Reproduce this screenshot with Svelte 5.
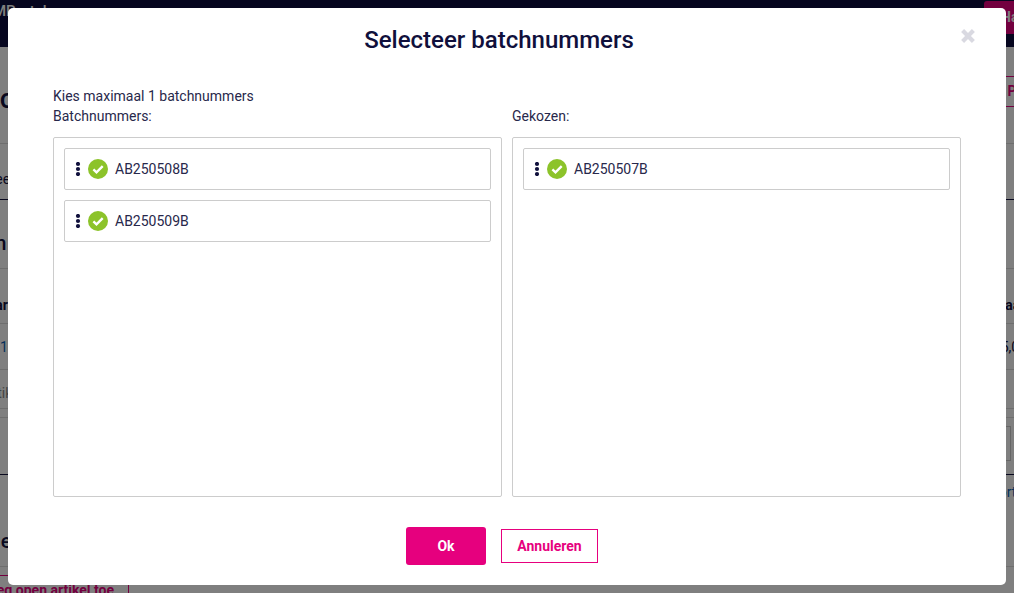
<script>
  const left = ['AB250508B', 'AB250509B'];
  const right = ['AB250507B'];
</script>

{#snippet item(code)}
  <div class="item">
    <svg class="dots" width="6" height="14" viewBox="0 0 6 14" aria-hidden="true">
      <circle cx="3" cy="2" r="2.1" />
      <circle cx="3" cy="7" r="2.1" />
      <circle cx="3" cy="12" r="2.1" />
    </svg>
    <svg class="check" width="20" height="20" viewBox="0 0 20 20" aria-hidden="true">
      <circle cx="10" cy="10" r="10" />
      <path d="M5.4 10.4 8.5 13.4 14.7 7.2" />
    </svg>
    <span>{code}</span>
  </div>
{/snippet}

<div class="page">
  <header class="top">
    <span class="brand">MPortal</span>
    <span class="headbtn">Ha</span>
  </header>
  <div class="row titlerow">
    <span class="pagetitle">Product</span>
    <span class="outline">Print</span>
  </div>
  <div class="row tabs"><span>Overzee</span></div>
  <div class="row section"><span class="h2">Artikelen</span></div>
  <div class="row thead"><b>Naar</b><b>aan</b></div>
  <div class="row tr"><span class="link">1</span><span>5,00</span></div>
  <div class="row tr2"><span class="muted">Artikel</span></div>
  <div class="row spacer"></div>
  <div class="row foot"><span class="inputbox"></span></div>
  <div class="row lower">
    <span class="h2 rule">Regel</span>
    <span class="link sort">Sorteer</span>
  </div>
  <div class="row gap"></div>
  <button class="add">Voeg open artikel toe</button>
</div>

<div class="overlay">
  <div class="modal">
    <h1>Selecteer batchnummers</h1>
    <svg class="close" width="14" height="14" viewBox="0 0 14 14" aria-hidden="true">
      <path d="M1.6 1.6 12.4 12.4M12.4 1.6 1.6 12.4" />
    </svg>
    <p class="hint">Kies maximaal 1 batchnummers</p>
    <div class="columns">
      <section>
        <p class="label">Batchnummers:</p>
        <div class="box">
          {#each left as code}
            {@render item(code)}
          {/each}
        </div>
      </section>
      <section>
        <p class="label">Gekozen:</p>
        <div class="box">
          {#each right as code}
            {@render item(code)}
          {/each}
        </div>
      </section>
    </div>
    <div class="actions">
      <button class="ok">Ok</button>
      <button class="cancel">Annuleren</button>
    </div>
  </div>
</div>

<style>
  :global(body) {
    margin: 0;
    background: #fff;
    font-family: Roboto, "Liberation Sans", sans-serif;
    overflow: hidden;
  }
  .page {
    width: 1014px;
    height: 593px;
    overflow: hidden;
    color: #10103c;
    font-size: 14px;
  }
  .top {
    height: 47px;
    background: #0c0d3e;
    display: flex;
    justify-content: space-between;
    color: #fff;
  }
  .brand {
    font-size: 15px;
    line-height: 24px;
    margin-left: -7px;
    font-weight: 500;
    margin-top: -1px;
  }
  .headbtn {
    width: 30px;
    height: 33px;
    margin-top: 1px;
    background: #e6007e;
    border-radius: 3px 0 0 3px;
    font-weight: 700;
    line-height: 33px;
    text-indent: 17px;
    overflow: hidden;
    white-space: nowrap;
  }
  .row {
    display: flex;
    justify-content: space-between;
    align-items: flex-start;
    border-bottom: 1px solid #ddd;
    box-sizing: border-box;
  }
  .titlerow {
    height: 97px;
    margin-left: -75px;
  }
  .pagetitle {
    font-size: 28px;
    line-height: 34px;
    margin-top: 35px;
    font-weight: 500;
  }
  .outline {
    border: 1px solid #e6007e;
    color: #e6007e;
    font-weight: 700;
    height: 29px;
    line-height: 29px;
    padding: 0 12px;
    margin-right: -37px;
    margin-top: 29px;
  }
  .tabs {
    height: 56px;
    margin-left: -40px;
    padding-top: 25px;
    line-height: 20px;
    border-bottom-color: #10103c;
  }
  .section {
    height: 69px;
    margin-left: -74px;
    padding-top: 31px;
  }
  .h2 {
    font-size: 20px;
    line-height: 24px;
    font-weight: 500;
  }
  .thead {
    height: 55px;
    margin: 0 -14px 0 -22px;
    padding-top: 26px;
    line-height: 20px;
  }
  .tr {
    height: 46px;
    margin: 0 -13px 0 -2px;
    padding-top: 13px;
    line-height: 20px;
  }
  .link {
    color: #0a5fb4;
  }
  .tr .link {
    margin-left: 2px;
  }
  .tr2 {
    height: 39px;
    margin-left: -17px;
    padding-top: 13px;
    line-height: 20px;
  }
  .muted {
    color: #888;
  }
  .spacer {
    height: 9px;
  }
  .foot {
    height: 57px;
    justify-content: flex-end;
    padding: 8px 3px 0 0;
    border-bottom-color: #10103c;
  }
  .inputbox {
    width: 60px;
    height: 35px;
    border: 1px solid #ccc;
    box-sizing: border-box;
    background: #fff;
  }
  .lower {
    height: 92px;
    margin: 0 -22px 0 -34px;
  }
  .rule {
    margin-top: 54px;
  }
  .sort {
    margin-top: 7px;
    line-height: 20px;
  }
  .gap {
    height: 8px;
    border: 0;
  }
  .add {
    display: block;
    box-sizing: border-box;
    width: 169px;
    height: 40px;
    margin-left: -40px;
    padding: 0 14px 10px 0;
    text-align: right;
    line-height: 20px;
    white-space: nowrap;
    background: #fff;
    color: #e6007e;
    border: 1px solid #e6007e;
    border-radius: 0;
  }
  .overlay {
    position: fixed;
    inset: 0;
    background: rgba(0, 0, 0, 0.5);
    display: flex;
    justify-content: center;
    align-items: flex-start;
    padding-top: 8px;
  }
  .modal {
    position: relative;
    box-sizing: border-box;
    width: 998px;
    height: 577px;
    padding: 0 45px;
    background: #fff;
    border-radius: 5px;
    color: #28284b;
  }
  h1 {
    margin: 0;
    padding: 17px 16px 0 0;
    height: 62px;
    box-sizing: border-box;
    text-align: center;
    color: #10103c;
    font-size: 24px;
    line-height: 30px;
    font-weight: 500;
  }
  .close {
    position: absolute;
    top: 21px;
    right: 31px;
  }
  .close path {
    fill: none;
    stroke: #d9d9e1;
    stroke-width: 4.2;
  }
  p {
    margin: 0;
    font-size: 14px;
    line-height: 20px;
  }
  .hint {
    padding-top: 16px;
  }
  .columns {
    display: grid;
    grid-template-columns: 449px 449px;
    gap: 10px;
  }
  .label {
    margin-bottom: 11px;
  }
  .box {
    height: 360px;
    box-sizing: border-box;
    border: 1px solid #ccc;
    border-radius: 2px;
    padding: 10px;
    display: flex;
    flex-direction: column;
    gap: 10px;
  }
  .item {
    height: 42px;
    box-sizing: border-box;
    border: 1px solid #ccc;
    border-radius: 2px;
    display: flex;
    align-items: center;
    padding: 0 0 1px 10px;
    font-size: 14px;
    color: #28284b;
  }
  .dots {
    fill: #10103c;
    flex: none;
  }
  .check {
    flex: none;
    margin-left: 7px;
    margin-right: 7px;
  }
  .check circle {
    fill: #8cc32a;
  }
  .check path {
    fill: none;
    stroke: #fff;
    stroke-width: 2.4;
  }
  .actions {
    display: flex;
    justify-content: center;
    align-items: center;
    gap: 15px;
    margin-top: 30px;
    padding-right: 10px;
  }
  button {
    font-family: inherit;
    font-size: 14px;
    font-weight: 700;
    cursor: pointer;
  }
  .ok {
    width: 80px;
    height: 38px;
    background: #e6007e;
    color: #fff;
    border: 0;
    border-radius: 3px;
  }
  .cancel {
    width: 97px;
    height: 34px;
    background: #fff;
    color: #e6007e;
    border: 1px solid #e6007e;
    border-radius: 0;
  }
</style>
